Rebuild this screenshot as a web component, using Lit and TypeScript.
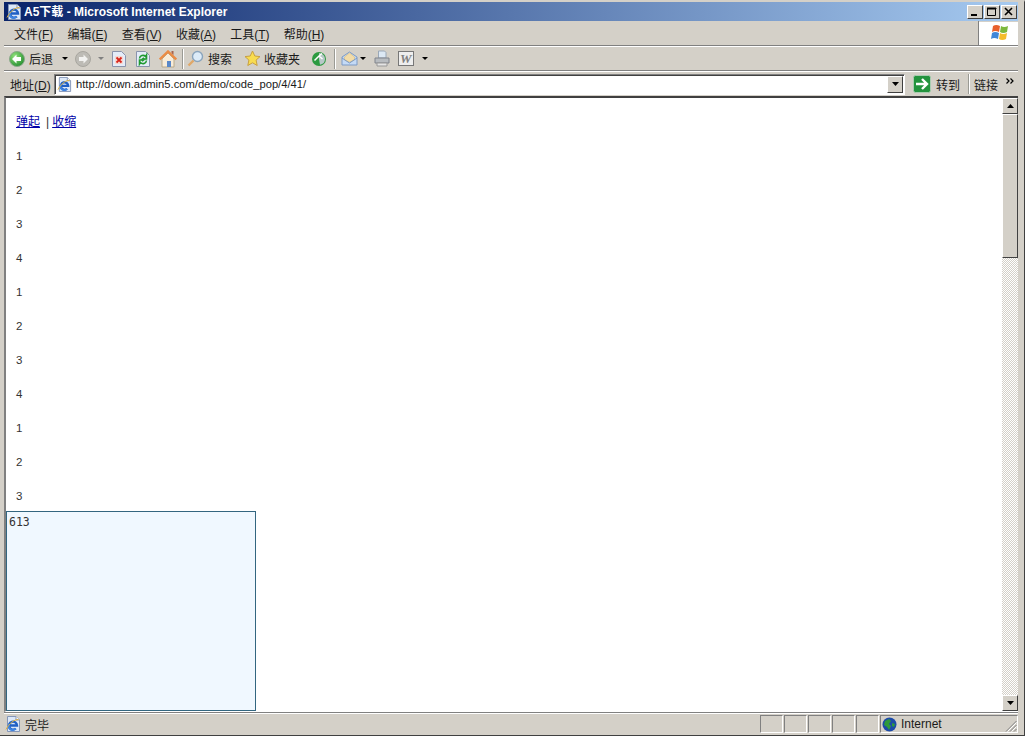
import { LitElement, html, css } from "lit";
import { customElement } from "lit/decorators.js";

const ie = (s = 16) => html`<svg width=${s} height=${s} viewBox="0 0 16 16"><path d="M2.500.5h8.500L14.500 4V15.500H2.500z" fill="#dce8f8" stroke="#8496b8"/><path d="M11 .5V4h3.500" fill="#fff" stroke="#8496b8"/><path d="M4.500 9.500h7.500a4 4 0 1 0-1.200 3" fill="none" stroke="#1f5fc4" stroke-width="2.400"/><path d="M4.500 7.800a3.800 3.800 0 0 0 6 4.700" fill="none" stroke="#3f84e0" stroke-width="2"/><path d="M1 13.500C4 7.500 9 3.500 13.500 3.500" fill="none" stroke="#e2b23c"/></svg>`;

const menus = ["文件(F)", "编辑(E)", "查看(V)", "收藏(A)", "工具(T)", "帮助(H)"];
const nums = [1, 2, 3, 4, 1, 2, 3, 4, 1, 2, 3];

@customElement("app-root")
export class AppRoot extends LitElement {
  static styles = css`
    :host { display: block; width: 1025px; height: 736px; overflow: hidden; font-family: "Liberation Sans", "Noto Sans CJK SC", sans-serif; font-size: 12px; color: #000; }
    * { box-sizing: border-box; }
    .window { width: 1025px; height: 736px; background: #d4d0c8; border-right: 1px solid #404040; border-bottom: 1px solid #404040; border-top: 2px solid #d4d0c8; padding: 0 6px 0 4px; display: flex; flex-direction: column; }
    .title { height: 19px; flex: none; display: flex; align-items: center; background: linear-gradient(90deg, #0a246a 0%, #a6caf0 100%); color: #fff; font-weight: bold; font-size: 12px; line-height: 16px; padding-left: 2px; gap: 2px; }
    .title .grow { flex: 1; }
    .wbtns { display: flex; margin-right: 1px; }
    .wbtn { width: 16px; height: 14px; margin-left: 1px; background: #d4d0c8; border: 1px solid; border-color: #fff #404040 #404040 #fff; display: flex; align-items: center; justify-content: center; }
    .menu { height: 25px; flex: none; display: flex; align-items: center; border-bottom: 1px solid #808080; }
    .menu .items { flex: 1; display: flex; padding-left: 10px; gap: 14.200px; color: #1a1a1a; height: 100%; align-items: center; border-right: 1px solid #808080; }
    .u { text-decoration: underline; }
    .logo { width: 39px; height: 23px; background: #fff; display: flex; align-items: center; justify-content: center; }
    .tools { height: 25px; flex: none; display: flex; align-items: center; border-top: 1px solid #fff; border-bottom: 1px solid #808080; padding-left: 1px; }
    .tools > * { flex: none; }
    .sep { width: 1px; height: 20px; background: #9a9a94; box-shadow: 1px 0 #fff; }
    .arrow { width: 0; height: 0; border: 3px solid transparent; border-top: 3px solid #000; border-bottom: 0; }
    .arrow.dim { border-top-color: #808080; }
    .lbl { color: #1a1a1a; }
    .addr { height: 25px; flex: none; display: flex; align-items: center; border-top: 1px solid #fff; }
    .addr .lab { width: 50px; padding-left: 6px; flex: none; color: #1a1a1a; white-space: nowrap; }
    .field { width: 851px; height: 21px; flex: none; background: #fff; border: 1px solid; border-color: #808080 #fff #fff #808080; box-shadow: inset 1px 1px #404040; display: flex; align-items: center; padding-left: 2px; gap: 4px; font-size: 11.200px; color: #1a1a1a; }
    .field .url { flex: 1; white-space: nowrap; }
    .combo { width: 16px; height: 17px; background: #d4d0c8; border: 1px solid; border-color: #fff #404040 #404040 #fff; display: flex; align-items: center; justify-content: center; margin-right: 1px; }
    .go { display: flex; align-items: center; margin-left: 8px; gap: 5px; width: 51px; flex: none; color: #1a1a1a; }
    .links { display: flex; align-items: center; flex: 1; border-left: 1px solid #9a9a94; margin-left: 4px; height: 20px; padding-left: 5px; color: #1a1a1a; box-shadow: inset 1px 0 #fff; }
    .links svg { margin: -6px 0 0 8px; }
    .view { flex: none; height: 616px; position: relative; border-top: 2px solid #404040; border-left: 2px solid #808080; border-bottom: 1px solid #fff; display: flex; background: #fff; overflow: hidden; }
    .page { flex: 1; padding: 16px 0 0 10px; overflow: hidden; font-size: 12px; color: #333; }
    .linksrow { height: 16px; line-height: 16px; white-space: pre; display: flex; }
    .linksrow a { color: #0000a8; text-decoration: underline; }
    .linksrow .bar { margin: 0 3px 0 6px; }
    .n { height: 34px; line-height: 34px; font-size: 11.500px; }
    .n.first { margin-top: 9px; }
    .pop { position: absolute; left: 0; bottom: 0; width: 250px; height: 200px; background: #f0f8ff; border: 1px solid #336680; padding: 3px 2px; font-family: "DejaVu Sans Mono", monospace; font-size: 11.500px; color: #333; }
    .sb { width: 16px; flex: none; display: flex; flex-direction: column; background-image: conic-gradient(#d4d0c8 25%, #fff 0 50%, #d4d0c8 0 75%, #fff 0); background-size: 2px 2px; }
    .sbtn { height: 16px; flex: none; background: #d4d0c8; border: 1px solid; border-color: #fff #404040 #404040 #fff; display: flex; align-items: center; justify-content: center; }
    .thumb { height: 144px; flex: none; background: #d4d0c8; border: 1px solid; border-color: #fff #404040 #404040 #fff; }
    .sb .g { flex: 1; }
    .status { flex: 1; display: flex; align-items: center; border-top: 1px solid #808080; box-shadow: inset 0 1px #fff; }
    .status .main { flex: 1; display: flex; align-items: center; gap: 4px; padding-left: 1px; color: #1a1a1a; }
    .cell { width: 23px; height: 18px; border: 1px solid; border-color: #808080 #fff #fff #808080; margin-right: 1px; flex: none; }
    .zone { width: 138px; height: 18px; flex: none; border: 1px solid; border-color: #808080 #fff #fff #808080; display: flex; align-items: center; gap: 4px; padding-left: 1px; font-size: 12px; color: #1a1a1a; position: relative; }
    .grip { position: absolute; right: 0; bottom: 0; }
  `;

  private up() { return html`<svg width="7" height="4" viewBox="0 0 7 4"><path d="M3.500 0 7 4H0z"/></svg>`; }
  private down() { return html`<svg width="7" height="4" viewBox="0 0 7 4"><path d="M0 0h7L3.500 4z"/></svg>`; }

  render() {
    return html`<div class="window">
      <div class="title">
        ${ie(16)}<span>A5下载 - Microsoft Internet Explorer</span><span class="grow"></span>
        <div class="wbtns">
          <div class="wbtn"><svg width="10" height="9"><path d="M1 7h6v2H1z"/></svg></div>
          <div class="wbtn"><svg width="10" height="9"><path d="M0.500 1.500h8v7h-8zM0 1h9v1H0z" fill="none" stroke="#000"/></svg></div>
          <div class="wbtn"><svg width="10" height="9"><path d="M1 1l7 7M8 1 1 8" stroke="#000" stroke-width="1.600"/></svg></div>
        </div>
      </div>
      <div class="menu">
        <div class="items">${menus.map((m) => html`<span>${m.slice(0, 3)}<span class="u">${m[3]}</span>)</span>`)}</div>
        <div class="logo"><svg width="20" height="18" viewBox="0 0 20 18"><path d="M4 2Q7 0 11 2L10 8Q6 6 3 8z" fill="#e8602c"/><path d="M12 2Q15 4 19 2L18 8Q14 10 11 8z" fill="#7cb83c"/><path d="M3 9Q6 7 10 9L9 15Q5 13 2 15z" fill="#3f86d8"/><path d="M11 9Q14 11 18 9L17 15Q13 17 10 15z" fill="#f4bc2c"/></svg></div>
      </div>
      <div class="tools">
        <svg style="margin-left:4px" width="16" height="16" viewBox="0 0 16 16"><defs><radialGradient id="gb" cx=".35" cy=".3" r=".8"><stop offset="0" stop-color="#8fe07a"/><stop offset="1" stop-color="#1f8a2c"/></radialGradient></defs><circle cx="8" cy="8" r="7.500" fill="url(#gb)" stroke="#8aa88a"/><path d="M7.500 3.500 3 8l4.500 4.500V10H12V6H7.500z" fill="#fff"/></svg>
        <span class="lbl" style="margin-left:4px">后退</span>
        <span class="arrow" style="margin-left:9px"></span>
        <svg style="margin-left:7px" width="16" height="16" viewBox="0 0 16 16"><circle cx="8" cy="8" r="7.500" fill="#bdbbb5" stroke="#a8a69f"/><path d="M8.500 3.500 13 8l-4.500 4.500V10H4V6h4.500z" fill="#f2f2f0"/></svg>
        <span class="arrow dim" style="margin-left:7px"></span>
        <svg style="margin-left:8px" width="14" height="16" viewBox="0 0 14 16"><path d="M.5.500h9l4 4v11H.5z" fill="#e4ecf8" stroke="#8a94ac"/><rect x="3" y="5" width="8" height="8" rx="1" fill="#f6d8d0"/><path d="M4.500 6.500l5 5M9.500 6.500l-5 5" stroke="#d8241c" stroke-width="1.800"/></svg>
        <svg style="margin-left:10px" width="14" height="16" viewBox="0 0 14 16"><path d="M.5.500h9l4 4v11H.5z" fill="#e4ecf8" stroke="#8a94ac"/><path d="M3.500 7.500a3.500 3.500 0 0 1 6-2L10.500 4v4H6.500l1.500-1.200" fill="none" stroke="#1f9a30" stroke-width="1.600"/><path d="M10.500 9.500a3.500 3.500 0 0 1-6 2L3.500 13V9h4L6 10.200" fill="none" stroke="#1f9a30" stroke-width="1.600"/></svg>
        <svg style="margin-left:9px" width="18" height="18" viewBox="0 0 18 18"><path d="M3 9v8h12V9L9 3z" fill="#f8ecd8" stroke="#b8a888"/><path d="M.7 9.500 9 1.500l8.300 8" fill="none" stroke="#ec8c44" stroke-width="2.400"/><path d="M12.500 1h2v4l-2-2z" fill="#a8624a"/><rect x="8" y="11" width="4" height="6" fill="#5a88c8"/></svg>
        <span class="sep" style="margin-left:5px"></span>
        <svg style="margin-left:4px" width="17" height="17" viewBox="0 0 17 17"><circle cx="10.500" cy="6.500" r="5" fill="#dcebf8" stroke="#8aa4bc" stroke-width="1.400"/><path d="M6.500 10.500 1.500 15.500" stroke="#e0a868" stroke-width="2.400"/></svg>
        <span class="lbl" style="margin-left:4px">搜索</span>
        <svg style="margin-left:12px" width="17" height="17" viewBox="0 0 17 17"><path d="M8.500 1l2.300 5 5.200.6-3.900 3.500 1.100 5.400-4.700-2.700-4.700 2.700 1.100-5.400L1 6.600l5.200-.6z" fill="#f8dc50" stroke="#c8a040"/></svg>
        <span class="lbl" style="margin-left:3px">收藏夹</span>
        <svg style="margin-left:11px" width="16" height="16" viewBox="0 0 16 16"><circle cx="8" cy="8" r="7" fill="#2c9a40"/><path d="M8 2a6 6 0 0 1 6 6 6 6 0 0 1-5 5.800L8 8z" fill="#b8c8c8"/><path d="M3.500 9.500 8 5l3 -2.500M8 5l3.500 3" fill="none" stroke="#fff" stroke-width="1.500"/></svg>
        <span class="sep" style="margin-left:7px"></span>
        <svg style="margin-left:6px" width="17" height="17" viewBox="0 0 17 17"><path d="M1 7l7.500-5 7.500 5v8H1z" fill="#c4daf6" stroke="#7c9ac4"/><path d="M3.500 7l5-4 5 4v3l-5 2-5-2z" fill="#f2dca8" stroke="#d8b878" stroke-width=".6"/><path d="M1 8l7.500 5 7.500-5" fill="none" stroke="#7c9ac4"/></svg>
        <span class="arrow" style="margin-left:2px"></span>
        <svg style="margin-left:8px" width="16" height="17" viewBox="0 0 16 17"><path d="M4.500 1h6l1.500 1.500V8H4.500z" fill="#dce8f4" stroke="#9aa8b8"/><path d="M1 8h14v5H1z" fill="#b8bcc0" stroke="#80848c"/><path d="M3 13h10v3H3z" fill="#e4e4e4" stroke="#989898"/></svg>
        <svg style="margin-left:8px" width="17" height="16" viewBox="0 0 17 16"><rect x="0.500" y="0.500" width="15" height="14" fill="#eee" stroke="#777"/><text x="2" y="12" font-family="Liberation Serif" font-size="13" font-style="italic" font-weight="bold" fill="#808080">W</text></svg>
        <span class="arrow" style="margin-left:7px"></span>
      </div>
      <div class="addr">
        <div class="lab">地址(<span class="u">D</span>)</div>
        <div class="field">${ie(15)}<span class="url">http://down.admin5.com/demo/code_pop/4/41/</span><div class="combo">${this.down()}</div></div>
        <div class="go"><svg width="18" height="18" viewBox="0 0 18 18"><rect x="0.500" y="0.500" width="17" height="17" rx="2" fill="#23933e" stroke="#a8ccb0"/><path d="M3 9h10.500M9 4l5 5-5 5" fill="none" stroke="#fff" stroke-width="2.400"/></svg><span>转到</span></div>
        <div class="links"><span>链接</span><svg width="8" height="6" viewBox="0 0 8 6"><path d="M.5.500 3 3 .5 5.500M4.500.500 7 3 4.500 5.500" fill="none" stroke="#000" stroke-width="1.200"/></svg></div>
      </div>
      <div class="view">
        <div class="page">
          <div class="linksrow"><a>弹起</a><span class="bar">|</span><a>收缩</a></div>
          ${nums.map((n, i) => html`<div class=${i === 0 ? "n first" : "n"}>${n}</div>`)}
        </div>
        <div class="pop">613</div>
        <div class="sb"><div class="sbtn">${this.up()}</div><div class="thumb"></div><div class="g"></div><div class="sbtn">${this.down()}</div></div>
      </div>
      <div class="status">
        <div class="main">${ie(16)}<span>完毕</span></div>
        <div class="cell"></div><div class="cell"></div><div class="cell"></div><div class="cell"></div><div class="cell"></div>
        <div class="zone"><svg width="15" height="15" viewBox="0 0 15 15"><circle cx="7.500" cy="7.500" r="7" fill="#1c4aa8"/><path d="M3 4l4-2 2 2-2 3 2 2-2 4-2-3-3-2zM10 6l3 1-1 3-2-1z" fill="#2e9a3c"/></svg><span>Internet</span>
          <svg class="grip" width="12" height="12" viewBox="0 0 12 12"><path d="M11.500 1 1 11.500M11.500 5 5 11.500M11.500 9 9 11.500" stroke="#808080"/><path d="M11.500 2.500 2.500 11.500M11.500 6.500 6.500 11.500" stroke="#fff"/></svg>
        </div>
      </div>
    </div>`;
  }
}
